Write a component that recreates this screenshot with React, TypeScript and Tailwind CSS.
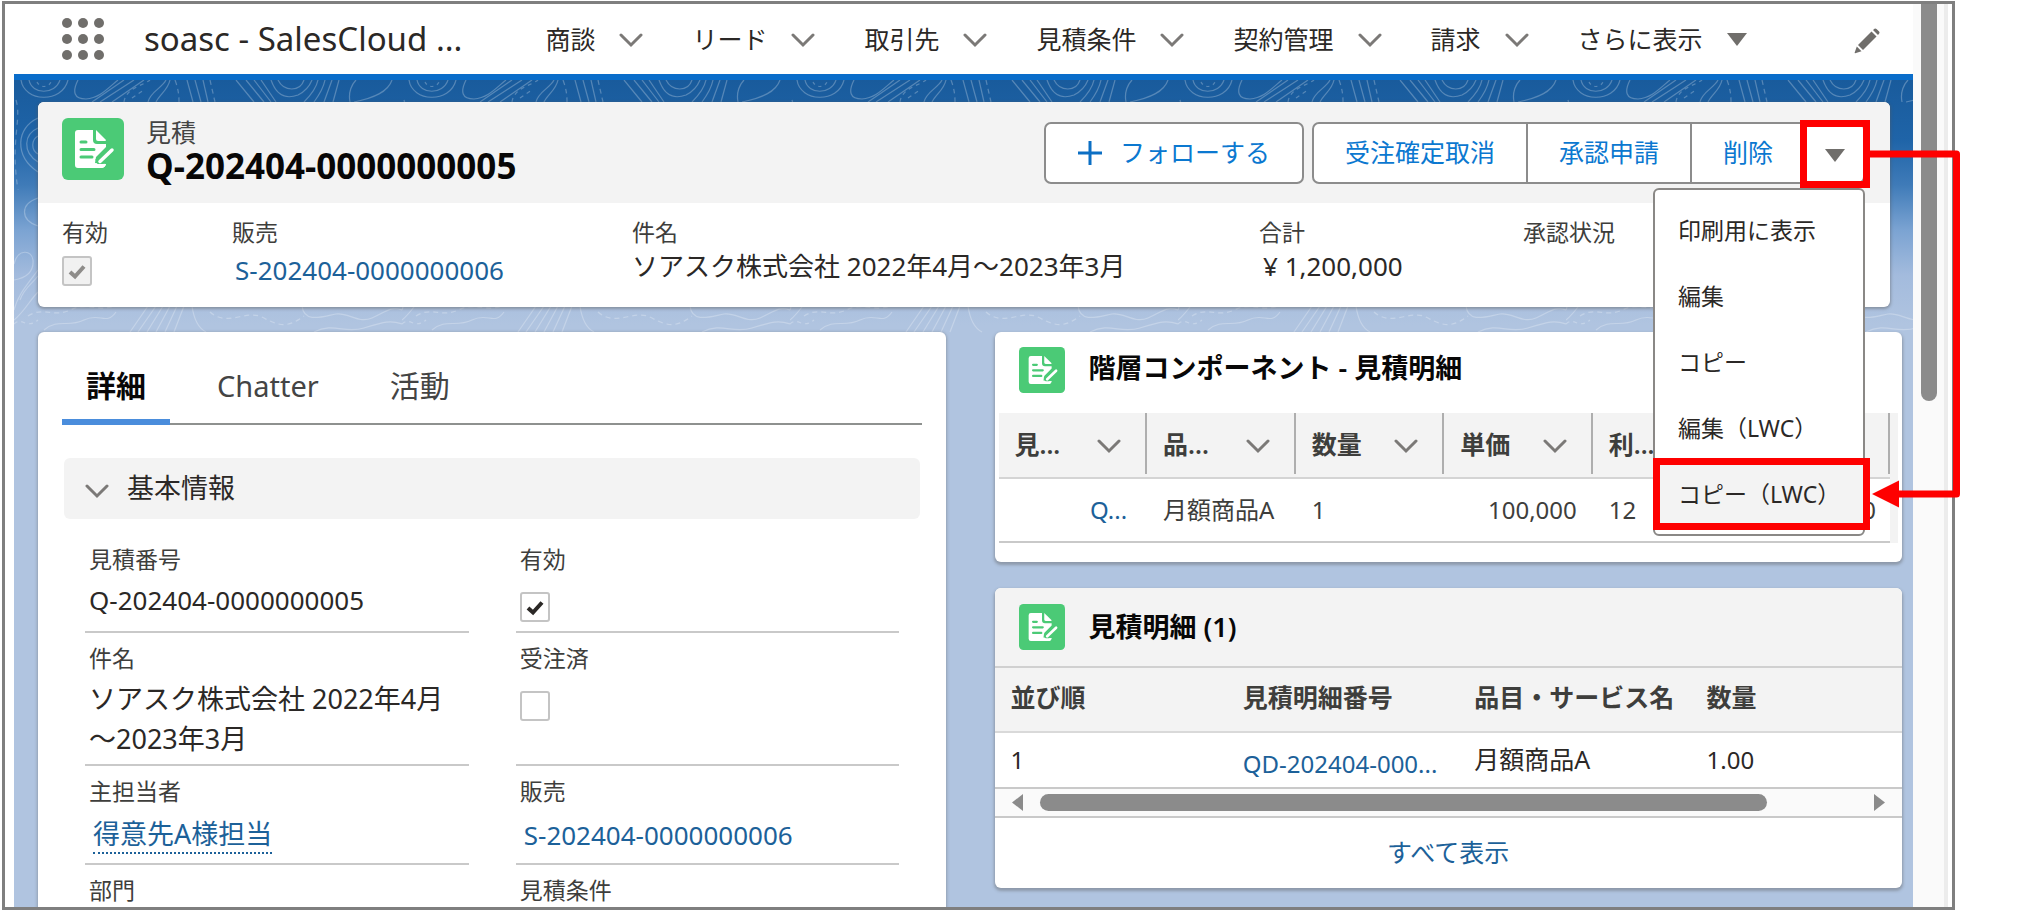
import React from "react";

const FONT = "font-['Noto_Sans','Noto_Sans_CJK_JP',sans-serif]";

function Chevron({ className = "" }: { className?: string }) {
  return (
    <svg viewBox="0 0 24 16" className={`h-4 w-6 shrink-0 ${className}`} fill="none" stroke="#7b7977" strokeWidth="3" strokeLinecap="round" aria-hidden="true">
      <path d="M2 3 L12 13 L22 3" />
    </svg>
  );
}

function Triangle() {
  return (
    <svg viewBox="0 0 20 13" className="h-[13px] w-5 shrink-0" aria-hidden="true">
      <path d="M0 0 H20 L10 13 Z" fill="#706e6b" />
    </svg>
  );
}

function QuoteIcon({ className }: { className: string }) {
  return (
    <svg viewBox="0 0 62 62" className={`shrink-0 ${className}`} aria-hidden="true">
      <rect width="62" height="62" rx="6" fill="#4bca76" />
      <path d="M16 12 H31 V22 Q31 26 35 26 H44 V29 L34 39 L33 45 L44 46 Q43 50 39 50 H16 Q13 50 13 47 V15 Q13 12 16 12 Z" fill="#fff" />
      <path d="M34 12 L44 22 Q44 23 43 23 H36 Q34 23 34 21 Z" fill="#fff" />
      <path d="M19 24 H24 M19 31.5 H32 M19 39 H30" stroke="#4bca76" strokeWidth="3" strokeLinecap="round" fill="none" />
      <path d="M50 32 L38 43.500 L35 45" stroke="#4bca76" strokeWidth="8" fill="none" />
      <path d="M50 32 L38 43.500" stroke="#fff" strokeWidth="3.500" strokeLinecap="round" fill="none" />
      <path d="M33 46 L44 46 Q43 50 39 50 H31 Z" fill="#fff" />
    </svg>
  );
}

function Contours() {
  return (
    <svg className="pointer-events-none absolute inset-x-0 top-0 h-[330px] w-full" aria-hidden="true">
      <defs>
        <pattern id="contours" width="388" height="330" patternUnits="userSpaceOnUse">
          <g fill="none" stroke="#fff" strokeOpacity="0.26" strokeWidth="1.2">
            <path d="M7 0 C10 22 48 24 54 0 M15 0 C18 15 41 15 46 0" />
            <path d="M23 2 C26 8 34 8 37 2" strokeDasharray="3 4" />
            <path d="M64 0 C58 12 60 19 72 19 C86 18 94 8 104 0" />
            <path d="M78 22 L110 0 M86 22 L120 0 M98 22 L130 0" />
            <path d="M110 22 C112 8 128 6 136 0 M118 18 L130 10" strokeDasharray="4 4" />
            <path d="M134 22 C136 12 148 8 152 0 M142 22 C146 14 154 10 156 0" />
            <path d="M161 0 C164 8 165 14 165 22 M196 0 L201 22" strokeDasharray="5 4" />
            <path d="M173 0 L179 22 M181 0 L187 22 M189 0 L194 22" />
            <path d="M222 0 L240 22 M232 0 L250 22 M240 0 L257 22 M247 0 L262 22" />
            <path d="M257 0 C262 14 270 20 284 15 C292 11 296 5 298 0 M264 0 C270 12 286 12 290 0" />
            <path d="M304 0 C302 10 294 18 290 22 M311 0 C309 10 303 18 300 22 M318 0 L310 22 M325 0 L319 22" />
            <path d="M336 22 C334 12 338 4 342 0 M340 22 C360 18 374 12 378 0" />
            <path d="M24 38 C2 48 0 76 24 92 M24 48 C10 54 8 72 24 82 M24 56 C17 60 17 70 24 74" />
            <path d="M2 20 C8 40 -4 60 4 110" strokeDasharray="5 5" />
            <path d="M24 118 C6 124 6 140 24 146" />
            <path d="M0 184 C4 168 18 170 19 180 C20 192 12 198 0 200 M6 220 C10 208 18 204 24 196 M0 230 C4 214 14 204 24 190 M0 240 C10 232 16 220 24 212" />
            <path d="M14 236 C30 226 40 238 56 230 S84 232 100 226" strokeDasharray="5 4" />
            <path d="M30 250 C44 238 54 248 70 240 S92 246 102 232" />
            <path d="M116 252 L134 226 M124 252 L142 226 M133 252 L149 226 M142 252 L156 226 M151 252 L163 226 M160 252 L170 226" />
            <path d="M178 226 C180 240 184 248 192 252" />
            <path d="M196 232 C214 248 232 228 250 238 S276 246 290 236" strokeDasharray="5 4" />
            <path d="M288 226 C290 244 310 236 322 234 S344 244 358 238 S376 226 388 230" />
            <path d="M300 252 C320 242 330 254 350 248 S376 240 388 244" />
            <path d="M0 244 C8 236 12 250 24 240" strokeDasharray="4 4" />
          </g>
        </pattern>
      </defs>
      <rect width="100%" height="100%" fill="url(#contours)" />
    </svg>
  );
}

const navItems = ["商談", "リード", "取引先", "見積条件", "契約管理", "請求"];

function GlobalHeader() {
  return (
    <header className="flex h-[76px] shrink-0 items-center border-b-[6px] border-[#0a6dca] bg-white pr-[33px] pl-12 text-[#2b2826]">
      <button type="button" aria-label="アプリケーションランチャー" className="shrink-0">
        <svg viewBox="0 0 42 42" className="size-[42px]" fill="#706e6b" aria-hidden="true">
          {[5, 21, 37].map((y) => [5, 21, 37].map((x) => <circle key={`${x}-${y}`} cx={x} cy={y} r="5" />))}
        </svg>
      </button>
      <span className="ml-10 text-[33px] leading-10 whitespace-nowrap">soasc - SalesCloud ...</span>
      <nav className="ml-[83px] flex items-center gap-[49px] text-[25px] leading-9 whitespace-nowrap">
        {navItems.map((label) => (
          <a key={label} href="#" className="flex items-center gap-6">
            {label}
            <Chevron className="mt-0.5" />
          </a>
        ))}
        <a href="#" className="flex items-center gap-6">
          さらに表示
          <Triangle />
        </a>
      </nav>
      <button type="button" aria-label="ナビゲーションを編集" className="mt-1 ml-auto shrink-0">
        <svg viewBox="0 0 26 26" className="size-[26px]" fill="#706e6b" aria-hidden="true">
          <path d="M17.500 3.500 L22.500 8.500 L9 22 L4 17 Z" />
          <path d="M19 2 L20.500 0.700 Q21.500 0 22.500 0.900 L25.100 3.500 Q26 4.500 25.200 5.500 L24 7 Z" />
          <path d="M2.800 18.500 L7.500 23.200 L1.200 25.300 Q0.400 25.400 0.700 24.600 Z" />
        </svg>
      </button>
    </header>
  );
}

function CheckBox({ label, checked, disabled = false }: { label: string; checked: boolean; disabled?: boolean }) {
  return (
    <span className="relative block size-[30px]">
      <input
        type="checkbox"
        aria-label={label}
        defaultChecked={checked}
        disabled={disabled}
        className="peer block size-full appearance-none rounded-[3px] border-2 border-[#c4c4c4] bg-white disabled:bg-[#f1f1f1]"
      />
      <svg
        viewBox="0 0 30 30"
        className="pointer-events-none absolute inset-0 hidden text-[#2b2826] peer-checked:block peer-disabled:text-[#8e8c8a]"
        fill="none"
        stroke="currentColor"
        strokeWidth="4"
        aria-hidden="true"
      >
        <path d="M8 16 L13 20.500 L22 10.500" />
      </svg>
    </span>
  );
}

const menuItems = ["印刷用に表示", "編集", "コピー", "編集（LWC）", "コピー（LWC）"];

function ActionMenu() {
  return (
    <ul role="menu" className="absolute top-[66px] right-0 z-20 w-[212px] rounded-md border-2 border-[#8a8886] bg-white py-[7px] text-[23px] leading-[66px] whitespace-nowrap text-[#2b2826]">
      {menuItems.map((item, i) => (
        <li key={item} role="none" className="relative">
          <button type="button" role="menuitem" className={`block w-full pl-[23px] text-left ${i === 4 ? "bg-[#f3f3f3]" : ""}`}>
            {item}
          </button>
          {i === 4 && <span className="pointer-events-none absolute -inset-x-[7px] -inset-y-[3px] left-[-2px] border-[7px] border-[#fe0000]" />}
        </li>
      ))}
    </ul>
  );
}

function RecordHeader() {
  const action = "border-r-2 border-[#8c8c8c] px-[31px]";
  return (
    <section className="relative z-10 mr-[23px] rounded-md bg-white shadow-[0_1px_3px_1px_rgba(90,90,90,0.45)]">
      <div className="flex h-[101px] items-start rounded-t-md bg-[#f3f3f3] pt-4 pr-[25px] pl-6">
        <QuoteIcon className="size-[62px]" />
        <div className="ml-[22px] whitespace-nowrap">
          <p className="text-[25px] leading-[28px] text-[#444]">見積</p>
          <h1 className="text-[35px] leading-[39px] font-bold text-[#080707]">Q-202404-0000000005</h1>
        </div>
        <div className="mt-1 ml-auto flex gap-2 text-[25px] whitespace-nowrap text-[#0b78d0]">
          <button type="button" className="flex h-[62px] items-center gap-[18px] rounded-[7px] border-2 border-[#8c8c8c] bg-white px-8">
            <svg viewBox="0 0 24 24" className="size-6" stroke="#0b6fc4" strokeWidth="3" aria-hidden="true">
              <path d="M12 0 V24 M0 12 H24" />
            </svg>
            フォローする
          </button>
          <div className="flex h-[62px] rounded-[7px] border-2 border-[#8c8c8c] bg-white">
            <button type="button" className={action}>受注確定取消</button>
            <button type="button" className={action}>承認申請</button>
            <button type="button" className={action}>削除</button>
            <div className="relative -m-0.5 w-[61px]">
              <button type="button" aria-label="さらにアクションを表示" aria-expanded="true" className="flex h-full w-full items-center justify-center pt-1">
                <Triangle />
              </button>
              <span className="pointer-events-none absolute -top-0.5 -right-[5px] -bottom-1 -left-1 z-30 border-[7px] border-[#fe0000]" />
              <ActionMenu />
            </div>
          </div>
        </div>
      </div>
      <dl className="grid h-[104px] grid-cols-[170fr_400fr_627fr_264fr_343fr] px-6 pt-[13px] text-[26px] leading-9 whitespace-nowrap text-[#2b2826]">
        <div>
          <dt className="text-[23px] leading-8 text-[#3e3e3c]">有効</dt>
          <dd className="pt-2">
            <CheckBox label="有効" checked disabled />
          </dd>
        </div>
        <div>
          <dt className="text-[23px] leading-8 text-[#3e3e3c]">販売</dt>
          <dd className="pt-1 pl-[3px]">
            <a href="#" className="text-[#1c6199]">S-202404-0000000006</a>
          </dd>
        </div>
        <div>
          <dt className="text-[23px] leading-8 text-[#3e3e3c]">件名</dt>
          <dd>ソアスク株式会社 2022年4月～2023年3月</dd>
        </div>
        <div>
          <dt className="text-[23px] leading-8 text-[#3e3e3c]">合計</dt>
          <dd className="pl-1">¥ 1,200,000</dd>
        </div>
        <div>
          <dt className="text-[23px] leading-8 text-[#3e3e3c]">承認状況</dt>
        </div>
      </dl>
    </section>
  );
}

function Field({ label, children }: { label: string; children?: React.ReactNode }) {
  return (
    <div className="min-h-[99px] border-b-2 border-[#c9c9c9] px-1 pt-[10px] pb-[5px]">
      <dt className="text-[23px] leading-[30px] text-[#3e3e3c]">{label}</dt>
      <dd className="mt-[6px] text-[26px] leading-10 text-[#2b2826]">{children}</dd>
    </div>
  );
}

function DetailCard() {
  const tab = "-mb-0.5 h-[93px] border-b-[6px] px-6 pt-5";
  return (
    <section className="min-w-0 rounded-t-md bg-white px-6 shadow-[0_1px_3px_1px_rgba(90,90,90,0.35)]">
      <div role="tablist" className="flex gap-[23px] border-b-2 border-[#8e918f] text-[29px] leading-10 text-[#444]">
        <button type="button" role="tab" aria-selected="true" className={`${tab} border-[#4a8ddc] text-[30px] font-bold text-[#080707]`}>詳細</button>
        <button type="button" role="tab" aria-selected="false" className={`${tab} border-transparent`}>Chatter</button>
        <button type="button" role="tab" aria-selected="false" className={`${tab} border-transparent text-[30px]`}>活動</button>
      </div>
      <button type="button" className="mx-0.5 mt-[33px] flex h-[61px] w-[calc(100%-4px)] items-center gap-[18px] rounded-md bg-[#f3f3f3] pl-[21px] text-[27px] text-[#2b2826]">
        <Chevron className="mt-1" />
        基本情報
      </button>
      <dl className="mt-[15px] grid grid-cols-[384fr_383fr] gap-x-[47px] px-[23px]">
        <Field label="見積番号">Q-202404-0000000005</Field>
        <Field label="有効">
          <div className="pt-3"><CheckBox label="有効" checked /></div>
        </Field>
        <Field label="件名">
          <span className="text-[27px]">ソアスク株式会社 2022年4月<br />～2023年3月</span>
        </Field>
        <Field label="受注済">
          <div className="pt-3"><CheckBox label="受注済" checked={false} /></div>
        </Field>
        <Field label="主担当者">
          <a href="#" className="mt-1 ml-1 inline-block border-b-2 border-dotted border-[#1c6199] text-[27px] leading-9 text-[#1c6199]">得意先A様担当</a>
        </Field>
        <Field label="販売">
          <a href="#" className="mt-[3px] ml-1 inline-block text-[#1c6199]">S-202404-0000000006</a>
        </Field>
        <Field label="部門" />
        <Field label="見積条件" />
      </dl>
    </section>
  );
}

const hierarchyColumns = ["見...", "品...", "数量", "単価", "利...", ""];

function HierarchyCard() {
  return (
    <section className="h-[230px] rounded-md bg-white px-1 shadow-[0_2px_3px_1px_rgba(90,90,90,0.4)]">
      <div className="flex h-[81px] items-center gap-6 pb-[5px] pl-5">
        <QuoteIcon className="size-[46px]" />
        <h2 className="pb-1 text-[27px] leading-9 font-semibold whitespace-nowrap text-[#080707]">階層コンポーネント - 見積明細</h2>
      </div>
      <div className="flex">
        <table className="w-full min-w-0 flex-1 table-fixed border-separate border-spacing-0 text-[25px] leading-8 whitespace-nowrap text-[#3e3e3c]">
          <thead>
            <tr>
              {hierarchyColumns.map((c, i) => (
                <th key={i} scope="col" className="h-[66px] border-b-2 border-[#d4d4d4] bg-[#f3f3f3] p-0 pb-[3px] text-left font-semibold">
                  <div className="flex h-[61px] items-center justify-between border-r-2 border-[#aeaeae] pr-6 pl-4">
                    {c}
                    {c !== "" && <Chevron className="mt-1" />}
                  </div>
                </th>
              ))}
            </tr>
          </thead>
          <tbody className="text-[24px]">
            <tr>
              <td className="h-[64px] border-b-2 border-[#c9c9c9] p-0 pr-5 text-right"><a href="#" className="text-[#1c6199]">Q...</a></td>
              <td className="border-b-2 border-[#c9c9c9] p-0 pl-4">月額商品A</td>
              <td className="border-b-2 border-[#c9c9c9] p-0 pl-4">1</td>
              <td className="border-b-2 border-[#c9c9c9] p-0 pr-4 text-right">100,000</td>
              <td className="border-b-2 border-[#c9c9c9] p-0 pl-4">12</td>
              <td className="border-b-2 border-[#c9c9c9] p-0 pr-3.5 text-right">0</td>
            </tr>
          </tbody>
        </table>
        <div className="w-2 shrink-0 bg-[#f3f3f3]" />
      </div>
    </section>
  );
}

function RelatedListCard() {
  return (
    <section className="h-[300px] overflow-hidden rounded-md bg-white shadow-[0_2px_3px_1px_rgba(90,90,90,0.4)]">
      <div className="flex h-[80px] items-center gap-6 border-b-2 border-[#d0d0d0] bg-[#f3f3f3] pl-6">
        <QuoteIcon className="size-[46px]" />
        <h2 className="text-[27px] leading-9 font-semibold whitespace-nowrap text-[#080707]">見積明細 (1)</h2>
      </div>
      <table className="w-full table-fixed border-separate border-spacing-0 text-left text-[25px] leading-8 whitespace-nowrap text-[#2b2826]">
        <colgroup>
          <col className="w-[25.6%]" />
          <col className="w-[25.5%]" />
          <col className="w-[25.6%]" />
          <col />
        </colgroup>
        <thead className="text-[#3e3e3c]">
          <tr>
            {["並び順", "見積明細番号", "品目・サービス名", "数量"].map((c) => (
              <th key={c} scope="col" className="h-[65px] border-b-2 border-[#d9d9d9] bg-[#f3f3f3] p-0 pb-[5px] pl-4 font-semibold">{c}</th>
            ))}
          </tr>
        </thead>
        <tbody className="text-[24px]">
          <tr>
            <td className="h-[56px] border-b-2 border-[#c9c9c9] p-0 pl-4">1</td>
            <td className="border-b-2 border-[#c9c9c9] p-0 pt-2 pl-4"><a href="#" className="text-[#1c6199]">QD-202404-000...</a></td>
            <td className="border-b-2 border-[#c9c9c9] p-0 pb-0.5 pl-4 text-[25px]">月額商品A</td>
            <td className="border-b-2 border-[#c9c9c9] p-0 pl-4">1.00</td>
          </tr>
        </tbody>
      </table>
      <div className="flex h-[29px] items-center border-b-2 border-[#c9c9c9] bg-[#fafafa] px-[17px]">
        <svg viewBox="0 0 11 17" className="h-[17px] w-[11px]" fill="#8b8b8b" aria-hidden="true"><path d="M11 0 V17 L0 8.500 Z" /></svg>
        <div className="mx-[17px] flex-1">
          <div className="h-[17px] w-[89%] rounded-full bg-[#8b8b8b]" />
        </div>
        <svg viewBox="0 0 11 17" className="h-[17px] w-[11px]" fill="#8b8b8b" aria-hidden="true"><path d="M0 0 V17 L11 8.500 Z" /></svg>
      </div>
      <a href="#" className="flex h-[68px] items-center justify-center text-[25px] leading-8 text-[#1c6199]">すべて表示</a>
    </section>
  );
}

export default function App() {
  return (
    <div className={`relative h-screen overflow-hidden bg-white pt-px pr-[72px] pb-[5px] pl-0.5 ${FONT}`}>
      <div className="flex h-full overflow-hidden border-[3px] border-[#7f7f7f] bg-white pl-[9px]">
        <div className="flex min-w-0 flex-1 flex-col">
          <GlobalHeader />
          <main className="relative min-h-0 flex-1 bg-[linear-gradient(180deg,#195b9c_0px,#1f64a8_60px,#3f7bb8_105px,#7ba3d2_150px,#a3bbdd_195px,#b0c4e0_245px)] pt-[22px] pl-6">
            <Contours />
            <div className="relative">
              <RecordHeader />
              <div className="mt-[25px] grid grid-cols-2 gap-[49px] pr-[11px]">
                <DetailCard />
                <div className="flex min-w-0 flex-col gap-[26px]">
                  <HierarchyCard />
                  <RelatedListCard />
                </div>
              </div>
            </div>
          </main>
        </div>
        <div className="flex w-[31px] shrink-0 justify-center bg-[#fafafa]">
          <div className="h-[397px] w-4 rounded-b-full bg-[#8b8b8b]" />
        </div>
        <div className="w-2 shrink-0 border-l-4 border-[#ececec]" />
      </div>
      <svg viewBox="0 0 90 360" className="pointer-events-none absolute top-[150px] right-[67px] z-40 h-[360px] w-[90px]" aria-hidden="true">
        <path d="M0 4 H86.500 V344 H26" fill="none" stroke="#fe0000" strokeWidth="7" strokeLinejoin="round" />
        <path d="M2 344 L29 330.500 V357.500 Z" fill="#fe0000" />
      </svg>
    </div>
  );
}
